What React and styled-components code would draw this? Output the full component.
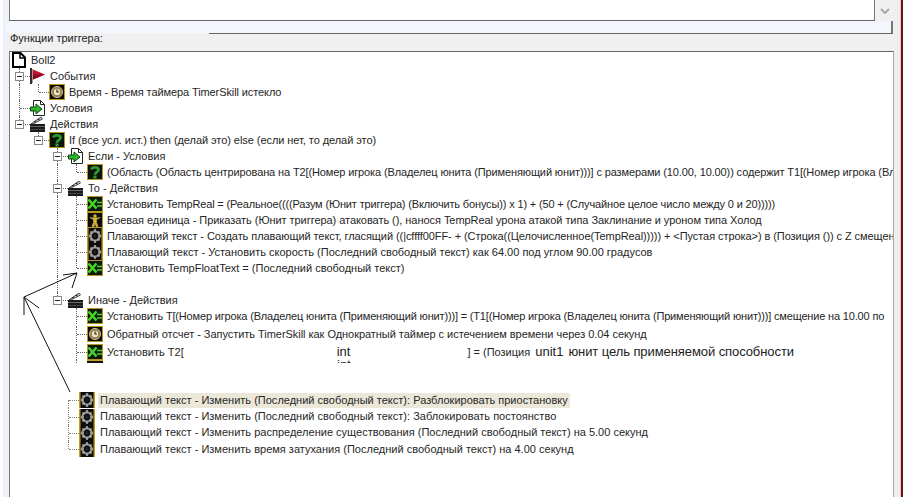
import React from "react";
import styled, { createGlobalStyle } from "styled-components";

const Global = createGlobalStyle`
  html, body { margin: 0; padding: 0; background: #f0f0f0; }
  #root { width: 903px; height: 497px; overflow: hidden; }
`;

const Page = styled.div`
  position: relative;
  display: flex;
  width: 903px;
  height: 497px;
  overflow: hidden;
  background: #f0f0f0;
  font-family: "Liberation Sans", Arial, sans-serif;
  color: #262626;
`;
const Gutter = styled.div`
  flex: 0 0 9px;
  background: linear-gradient(90deg, #fbfcff 0 3px, #eef1f6 3px 100%);
`;
const Main = styled.div`
  flex: 0 0 885px;
  display: flex;
  flex-direction: column;
  min-width: 0;
`;
const SideEdge = styled.div`
  flex: 1;
  background: linear-gradient(90deg, #efefef 0 6px, #e8c9c9 6px 7px, #761015 7px 100%);
`;
const TopRow = styled.div`
  flex: 0 0 21px;
  display: flex;
`;
const NotesBox = styled.div`
  flex: 0 0 866px;
  background: #fff;
  border-left: 1px solid #777;
  border-right: 1px solid #777;
  border-bottom: 1px solid #666;
  box-sizing: border-box;
`;
const ScrollStub = styled.div`
  flex: 1;
  display: flex;
  justify-content: center;
  padding-top: 8px;
  box-sizing: border-box;
  background: #f0f0f0;
`;
const Band = styled.div`
  flex: 0 0 12px;
  box-sizing: border-box;
  background: #f3f6fc;
  border-right: 2px solid #777;
  margin-right: 1px;
  margin-left: -3px;
`;
const GroupRule = styled.div`
  flex: 0 0 1px;
  margin-left: 200px;
  margin-right: 1px;
  background: #666;
`;
const GroupLabel = styled.div`
  flex: 0 0 20px;
  margin-top: -3px;
  box-sizing: border-box;
  padding-left: 1px;
  font-size: 11px;
  line-height: 14px;
  color: #222;
`;
const Tree = styled.div`
  flex: 1;
  min-height: 0;
  overflow: hidden;
  display: flex;
  flex-direction: column;
  background: #fff;
  border-top: 1px solid #666;
  border-left: 1px solid #777;
  border-right: 1px solid #aaa;
`;
const Row = styled.div`
  flex: 0 0 auto;
  display: flex;
  align-items: center;
  height: ${(p) => p.$h || 16}px;
  margin-top: ${(p) => p.$top || 0}px;
  margin-left: ${(p) => p.$left || 0}px;
  white-space: nowrap;
  font-size: 11px;
`;
const Guide = styled.span`
  position: relative;
  flex: 0 0 19px;
  align-self: stretch;
  &::before {
    content: "";
    display: ${(p) => (p.$v === "none" ? "none" : "block")};
    position: absolute;
    left: 9px;
    top: ${(p) => (p.$v === "down" ? "50%" : "0")};
    bottom: ${(p) => (p.$v === "up" ? "50%" : "0")};
    border-left: 1px dotted ${(p) => p.$c || "#666"};
  }
  &::after {
    content: "";
    display: ${(p) => (p.$hz ? "block" : "none")};
    position: absolute;
    left: 10px;
    right: -1px;
    top: 50%;
    border-top: 1px dotted ${(p) => p.$c || "#666"};
  }
`;
const Expander = styled.span`
  position: absolute;
  z-index: 1;
  left: 5px;
  top: 50%;
  width: 9px;
  height: 9px;
  margin-top: -4px;
  box-sizing: border-box;
  border: 1px solid #8a8a8a;
  background: #fff;
  &::before {
    content: "";
    position: absolute;
    left: 1px;
    right: 1px;
    top: 3px;
    height: 1px;
    background: #222;
  }
`;
const IconBox = styled.span`
  flex: 0 0 16px;
  display: flex;
  height: 16px;
  margin-left: 1px;
  margin-right: ${(p) => p.$gap ?? 2}px;
  svg { display: block; }
`;
const Label = styled.span`
  padding: 0 2px;
  line-height: 15px;
  margin-left: ${(p) => p.$ml || 0}px;
  letter-spacing: ${(p) => p.$ls || 0}px;
  background: ${(p) => (p.$hl ? "#ebe8d9" : "transparent")};
`;
const Hand = styled.span`
  font-size: 13px;
  letter-spacing: ${(p) => p.$ls || 0}px;
  color: #222;
  margin-left: ${(p) => p.$ml}px;
  position: relative;
  top: -1px;
`;
const ClippedRow = styled.div`
  flex: 0 0 3px;
  display: flex;
  overflow: hidden;
  height: 3px;
`;
const ClipTop = styled.span`
  flex: 0 0 16px;
  height: 3px;
  margin-left: 1px;
  background: linear-gradient(#c9a21b 0 1px, #111 1px 100%);
`;
const ClipInt = styled.span`
  font-size: 13px;
  line-height: 10px;
  margin-left: 234px;
`;
const ArrowLayer = styled.svg`
  position: absolute;
  left: 0;
  top: 0;
  z-index: 2;
  pointer-events: none;
`;

const Svg = ({ children }) => (
  <svg width="16" height="16" viewBox="0 0 16 16">{children}</svg>
);
const Frame = ({ children, bg = "#0c0c0c" }) => (
  <Svg>
    <rect x="0" y="0" width="16" height="16" fill={bg} />
    <rect x="0.5" y="0.5" width="15" height="15" fill="none" stroke="#b8961c" />
    {children}
  </Svg>
);
const DocIcon = () => (
  <Svg>
    <path d="M2 1h7.5L14 5.5V15H2z" fill="#fff" stroke="#000" strokeWidth="2" />
    <path d="M9 1v5h5" fill="none" stroke="#000" strokeWidth="1.5" />
  </Svg>
);
const FlagIcon = () => (
  <Svg>
    <rect x="0" y="0" width="2" height="16" fill="#3b2a2a" />
    <rect x="2" y="1" width="1" height="14" fill="#a98" />
    <path d="M3 1.5L15 6.5L3 11.5z" fill="#c4122e" />
    <path d="M3 6.5L15 6.5L3 11.5z" fill="#8c0a20" />
  </Svg>
);
const ClockIcon = () => (
  <Frame>
    <circle cx="8" cy="8" r="5.5" fill="#8d7a4a" stroke="#d8c48c" />
    <circle cx="8" cy="8" r="3.2" fill="#f1e7c8" />
    <path d="M8 5.5V8h2" fill="none" stroke="#2a1e08" strokeWidth="1.2" />
  </Frame>
);
const CondIcon = () => (
  <Svg>
    <path d="M3.5 0.5h7l4 4v11h-11z" fill="#fff" stroke="#222" />
    <path d="M10.5 0.5v4h4" fill="none" stroke="#222" />
    <path d="M0.5 7h5.5V4l6 5-6 5v-3H0.5z" fill="#2fb52f" stroke="#0c4a12" />
  </Svg>
);
const ActIcon = () => (
  <Svg>
    <rect x="0" y="8" width="15" height="8" fill="#1b1b1b" />
    <rect x="0" y="10" width="15" height="1" fill="#666" />
    <rect x="0" y="13" width="15" height="1" fill="#444" />
    <path d="M1 8L11 1l1.5 2L3 8z" fill="#d5d5d5" stroke="#222" strokeWidth="0.8" />
    <path d="M4 6l2-1M7.5 4l2-1" stroke="#222" strokeWidth="1.2" />
  </Svg>
);
const QuestIcon = () => (
  <Frame bg="#0d140c">
    <path d="M4.5 5.5C5 2.8 11.5 2.5 11.5 5.8c0 2.4-3.5 2.3-3.5 5" fill="none" stroke="#2f9a29" strokeWidth="2.8" />
    <rect x="6.5" y="11.5" width="3" height="3" fill="#2f9a29" />
  </Frame>
);
const SetIcon = () => (
  <Frame bg="#0c1a0a">
    <path d="M1.5 3.5L9.5 12.5M9.5 3.5L1.5 12.5" stroke="#45d52a" strokeWidth="2.6" />
    <path d="M10 6.5h5M10 10h5" stroke="#45d52a" strokeWidth="1.6" />
  </Frame>
);
const UnitIcon = () => (
  <Frame>
    <circle cx="8" cy="4" r="1.7" fill="#d9b23a" />
    <path d="M2.5 5.5L6.5 7.5V10.5L5 14.5H7L8 11L9 14.5H11L9.5 10.5V7.5L13.5 5.5" fill="#d9b23a" stroke="#d9b23a" strokeWidth="0.6" />
  </Frame>
);
const GearIcon = () => (
  <Svg>
    <rect x="0" y="0" width="16" height="16" fill="#0d0d0d" />
    <rect x="0" y="0" width="1.5" height="16" fill="#c39a14" />
    <rect x="14.5" y="0" width="1.5" height="16" fill="#c39a14" />
    <circle cx="8" cy="8" r="4.6" fill="none" stroke="#8d8d8d" strokeWidth="2.4" />
    <path d="M8 1v3M8 12v3M1.8 8h3M11.2 8h3M3.5 3.5l2 2M10.5 10.5l2 2M12.5 3.5l-2 2M5.5 10.5l-2 2" stroke="#a9a9a9" strokeWidth="1.7" />
    <circle cx="8" cy="8" r="1.8" fill="#222" />
  </Svg>
);

const GuideCell = ({ kind, color }) => {
  const map = {
    none: { v: "none" },
    pipe: { v: "full" },
    tee: { v: "full", hz: true },
    end: { v: "up", hz: true },
    start: { v: "down", hz: true },
    boxTee: { v: "full", hz: true, box: true },
    boxEnd: { v: "up", hz: true, box: true },
  };
  const g = map[kind];
  return (
    <Guide $v={g.v} $hz={g.hz} $c={color}>
      {g.box && <Expander />}
    </Guide>
  );
};

const TreeRow = ({ cols = [], icon: Icon, text, top, children, color, h, left, gap, hl, ls }) => (
  <Row $top={top} $h={h} $left={left}>
    {cols.map((k, i) => (
      <GuideCell key={i} kind={k} color={color} />
    ))}
    {Icon && (
      <IconBox $gap={gap}>
        <Icon />
      </IconBox>
    )}
    {text && <Label $hl={hl} $ls={ls}>{text}</Label>}
    {children}
  </Row>
);

const N = "none";
const rows = [
  { icon: DocIcon, text: "Boll2" },
  { cols: ["boxTee"], icon: FlagIcon, text: "События" },
  { cols: ["pipe", "end"], icon: ClockIcon, ls: -0.1, text: "Время - Время таймера TimerSkill истекло" },
  { cols: ["tee"], icon: CondIcon, text: "Условия" },
  { cols: ["boxEnd"], icon: ActIcon, text: "Действия" },
  { cols: [N, "boxEnd"], icon: QuestIcon, ls: -0.06, text: "If (все усл. ист.) then (делай это) else (если нет, то делай это)" },
  { cols: [N, N, "boxTee"], icon: CondIcon, text: "Если - Условия" },
  { cols: [N, N, "pipe", "end"], icon: QuestIcon, ls: -0.12, text: "(Область (Область центрирована на T2[(Номер игрока (Владелец юнита (Применяющий юнит)))] с размерами (10.00, 10.00)) содержит T1[(Номер игрока (Владелец юнита" },
  { cols: [N, N, "boxTee"], icon: ActIcon, text: "То - Действия" },
  { cols: [N, N, "pipe", "tee"], icon: SetIcon, ls: -0.15, text: "Установить TempReal = (Реальное((((Разум (Юнит триггера) (Включить бонусы)) x 1) + (50 + (Случайное целое число между 0 и 20)))))" },
  { cols: [N, N, "pipe", "tee"], icon: UnitIcon, ls: -0.05, text: "Боевая единица - Приказать (Юнит триггера) атаковать (), нанося TempReal урона атакой типа Заклинание и уроном типа Холод" },
  { cols: [N, N, "pipe", "tee"], icon: GearIcon, ls: -0.07, text: "Плавающий текст - Создать плавающий текст, гласящий ((|cffff00FF- + (Строка((Целочисленное(TempReal))))) + <Пустая строка>) в (Позиция ()) с Z смещением" },
  { cols: [N, N, "pipe", "tee"], icon: GearIcon, text: "Плавающий текст - Установить скорость (Последний свободный текст) как 64.00 под углом 90.00 градусов" },
  { cols: [N, N, "pipe", "end"], icon: SetIcon, text: "Установить TempFloatText = (Последний свободный текст)" },
  { cols: [N, N, "pipe"] },
  { cols: [N, N, "boxEnd"], icon: ActIcon, text: "Иначе - Действия" },
  { cols: [N, N, N, "tee"], icon: SetIcon, ls: -0.17, text: "Установить T[(Номер игрока (Владелец юнита (Применяющий юнит)))] = (T1[(Номер игрока (Владелец юнита (Применяющий юнит)))] смещение на 10.00 по" },
  { cols: [N, N, N, "tee"], icon: ClockIcon, top: 2, ls: -0.04, text: "Обратный отсчет - Запустить TimerSkill как Однократный таймер с истечением времени через 0.04 секунд" },
];
const lower = [
  { cols: ["start"], hl: true, text: "Плавающий текст - Изменить (Последний свободный текст): Разблокировать приостановку" },
  { cols: ["tee"], text: "Плавающий текст - Изменить (Последний свободный текст): Заблокировать постоянство" },
  { cols: ["tee"], text: "Плавающий текст - Изменить распределение существования (Последний свободный текст) на 5.00 секунд" },
  { cols: ["end"], text: "Плавающий текст - Изменить время затухания (Последний свободный текст) на 4.00 секунд" },
];

export default function App() {
  return (
    <Page>
      <Global />
      <Gutter />
      <Main>
        <TopRow>
          <NotesBox />
          <ScrollStub>
            <svg width="10" height="6" viewBox="0 0 10 6">
              <path d="M1 1l4 4 4-4" fill="none" stroke="#a8a8a8" strokeWidth="2" />
            </svg>
          </ScrollStub>
        </TopRow>
        <Band />
        <GroupRule />
        <GroupLabel>Функции триггера:</GroupLabel>
        <Tree>
          {rows.map((r, i) => (
            <TreeRow key={i} {...r} />
          ))}
          <TreeRow cols={[N, N, N, "tee"]} icon={SetIcon} top={2} text="Установить T2[">
            <Hand $ml={151}>int</Hand>
            <Label $ml={115}>] = (Позиция</Label>
            <Hand $ml={3}>unit1</Hand>
            <Hand $ml={5} $ls={-0.08}>юнит цель применяемой способности</Hand>
          </TreeRow>
          <ClippedRow>
            <Guide $v="none" />
            <Guide $v="none" />
            <Guide $v="none" />
            <Guide $v="full" />
            <ClipTop />
            <ClipInt>int</ClipInt>
          </ClippedRow>
          <Row $h={29} />
          {lower.map((r, i) => (
            <TreeRow key={i} {...r} h={16.4} left={49} icon={GearIcon} gap={3} ls={0.01} color="#8a8570" />
          ))}
        </Tree>
      </Main>
      <SideEdge />
      <ArrowLayer width="903" height="497" viewBox="0 0 903 497">
        <path d="M77 273L24 297L70 392M63 275L77 273L72 288M39 308L24 297L24 315" fill="none" stroke="#111" strokeWidth="1" />
      </ArrowLayer>
    </Page>
  );
}
